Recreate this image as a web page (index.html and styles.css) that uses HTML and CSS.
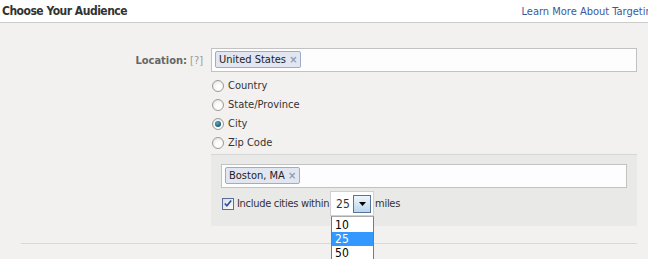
FILE: index.html
```html
<!DOCTYPE html>
<html>
<head>
<meta charset="utf-8">
<link rel="stylesheet" href="styles.css">
</head>
<body>
<header class="head">
  <h1 class="title">Choose Your Audience</h1>
  <a class="learn" href="#">Learn More About Targeting</a>
</header>
<main class="form">
  <div class="row">
    <div class="label"><b>Location:</b><span class="help">[?]</span></div>
    <div class="field">
      <div class="input"><span class="token">United States <i class="x">×</i></span></div>
      <ul class="radios">
        <li><span class="radio"></span>Country</li>
        <li><span class="radio"></span>State/Province</li>
        <li><span class="radio on"></span>City</li>
        <li><span class="radio"></span>Zip Code</li>
      </ul>
      <div class="sub">
        <div class="input"><span class="token">Boston, MA <i class="x">×</i></span></div>
        <div class="within">
          <span class="check"><svg width="11" height="11" viewBox="0 0 11 11"><path d="M2 5.5 L4.3 8 L9 2.3" fill="none" stroke="#2a4f9e" stroke-width="1.8"/></svg></span>
          <span class="wtext">Include cities within</span>
          <span class="select">
            <span class="val">25</span>
            <span class="arrow"><svg width="7" height="4" viewBox="0 0 7 4"><path d="M0 0 H7 L3.5 4 Z" fill="#000"/></svg></span>
            <ul class="drop">
              <li>10</li>
              <li class="sel">25</li>
              <li>50</li>
            </ul>
          </span>
          <span class="wtext">miles</span>
        </div>
      </div>
    </div>
  </div>
  <div class="rule"></div>
</main>
</body>
</html>
```

FILE: styles.css
```css
html, body {
  margin: 0;
  padding: 0;
  overflow: hidden;
  background: #f2f1ef;
}
body {
  font-family: "DejaVu Sans Condensed", "DejaVu Sans", sans-serif;
  font-size: 11px;
  color: #333;
  width: 648px;
  height: 259px;
}
.head {
  display: flex;
  align-items: center;
  height: 22px;
  background: #fff;
  border-bottom: 1px solid #cccccc;
  padding-left: 2px;
  white-space: nowrap;
}
.title {
  margin: 0;
  font-size: 12px;
  letter-spacing: -0.5px;
  font-weight: bold;
  color: #333;
}
.learn {
  margin-left: auto;
  margin-right: -10px;
  color: #3b5998;
  text-decoration: none;
  font-size: 11px;
}
.form {
  padding-top: 25px;
}
.row {
  display: grid;
  grid-template-columns: 203px 426px;
  column-gap: 8px;
}
.label {
  height: 24px;
  display: flex;
  align-items: center;
  justify-content: flex-end;
  color: #666;
}
.label b {
  font-weight: bold;
  color: #666;
}
.help {
  margin-left: 3px;
  color: #999;
}
.input {
  box-sizing: border-box;
  height: 24px;
  border: 1px solid #c2c2c2;
  background: #fdfdfd;
  padding: 2px 3px;
  display: flex;
  align-items: flex-start;
}
.token {
  box-sizing: border-box;
  height: 17px;
  line-height: 15px;
  padding: 0 3px;
  border: 1px solid #9daccc;
  border-radius: 2px;
  background: #e2e6f0;
  color: #222;
}
.x {
  font-style: normal;
  font-weight: bold;
  color: #8f9ab6;
}
.radios {
  list-style: none;
  margin: 4px 0 0;
  padding: 0;
}
.radios li {
  height: 19px;
  display: flex;
  align-items: center;
}
.radio {
  box-sizing: border-box;
  width: 12px;
  height: 12px;
  margin: 0 4px 0 1px;
  border-radius: 50%;
  border: 1px solid #9a9a9a;
  background: radial-gradient(circle at 60% 65%, #fefefe 30%, #dcdcd6 100%);
  display: flex;
  align-items: center;
  justify-content: center;
}
.radio.on::after {
  content: "";
  width: 6px;
  height: 6px;
  border-radius: 50%;
  background: radial-gradient(circle at 40% 35%, #5fa8c2 0%, #0e4f6c 80%);
}
.sub {
  margin-top: 2px;
  box-sizing: border-box;
  height: 72px;
  background: #e9e9e8;
  border-top: 1px solid #d6d6d6;
  padding: 9px 10px 0;
}
.within {
  display: flex;
  align-items: center;
  margin-top: 3px;
  height: 25px;
}
.wtext {
  letter-spacing: -0.3px;
}
.check {
  box-sizing: border-box;
  width: 12px;
  height: 12px;
  margin: 0 3px 0 1px;
  border: 1px solid #5a6e96;
  background: linear-gradient(135deg, #dcdce6, #fbfbfd);
  display: flex;
  align-items: center;
  justify-content: center;
}
.select {
  position: relative;
  box-sizing: border-box;
  width: 44px;
  height: 25px;
  margin: 0 1px;
  background: #fff;
  border: 1px solid #d0d0d0;
  display: flex;
  align-items: center;
  padding-left: 5px;
  font-size: 12px;
}
.val {
  flex: 1;
}
.arrow {
  box-sizing: border-box;
  width: 18px;
  height: 18px;
  margin-right: 2px;
  border: 1px solid #5a7396;
  background: linear-gradient(#eef6fc, #b8d6ee);
  display: flex;
  align-items: center;
  justify-content: center;
}
.drop {
  position: absolute;
  left: 0;
  top: 24px;
  width: 43px;
  box-sizing: border-box;
  margin: 0;
  padding: 1px 0 0;
  list-style: none;
  background: #fff;
  border: 1px solid #7a7a7a;
  border-top-color: #aaa;
  font-size: 12px;
}
.drop li {
  height: 14px;
  line-height: 14px;
  padding-left: 3px;
  color: #000;
}
.drop li.sel {
  background: #3399ff;
  color: #fff;
}
.rule {
  margin: 17px 11px 0 21px;
  border-top: 1px solid #d8d8d8;
}
```
